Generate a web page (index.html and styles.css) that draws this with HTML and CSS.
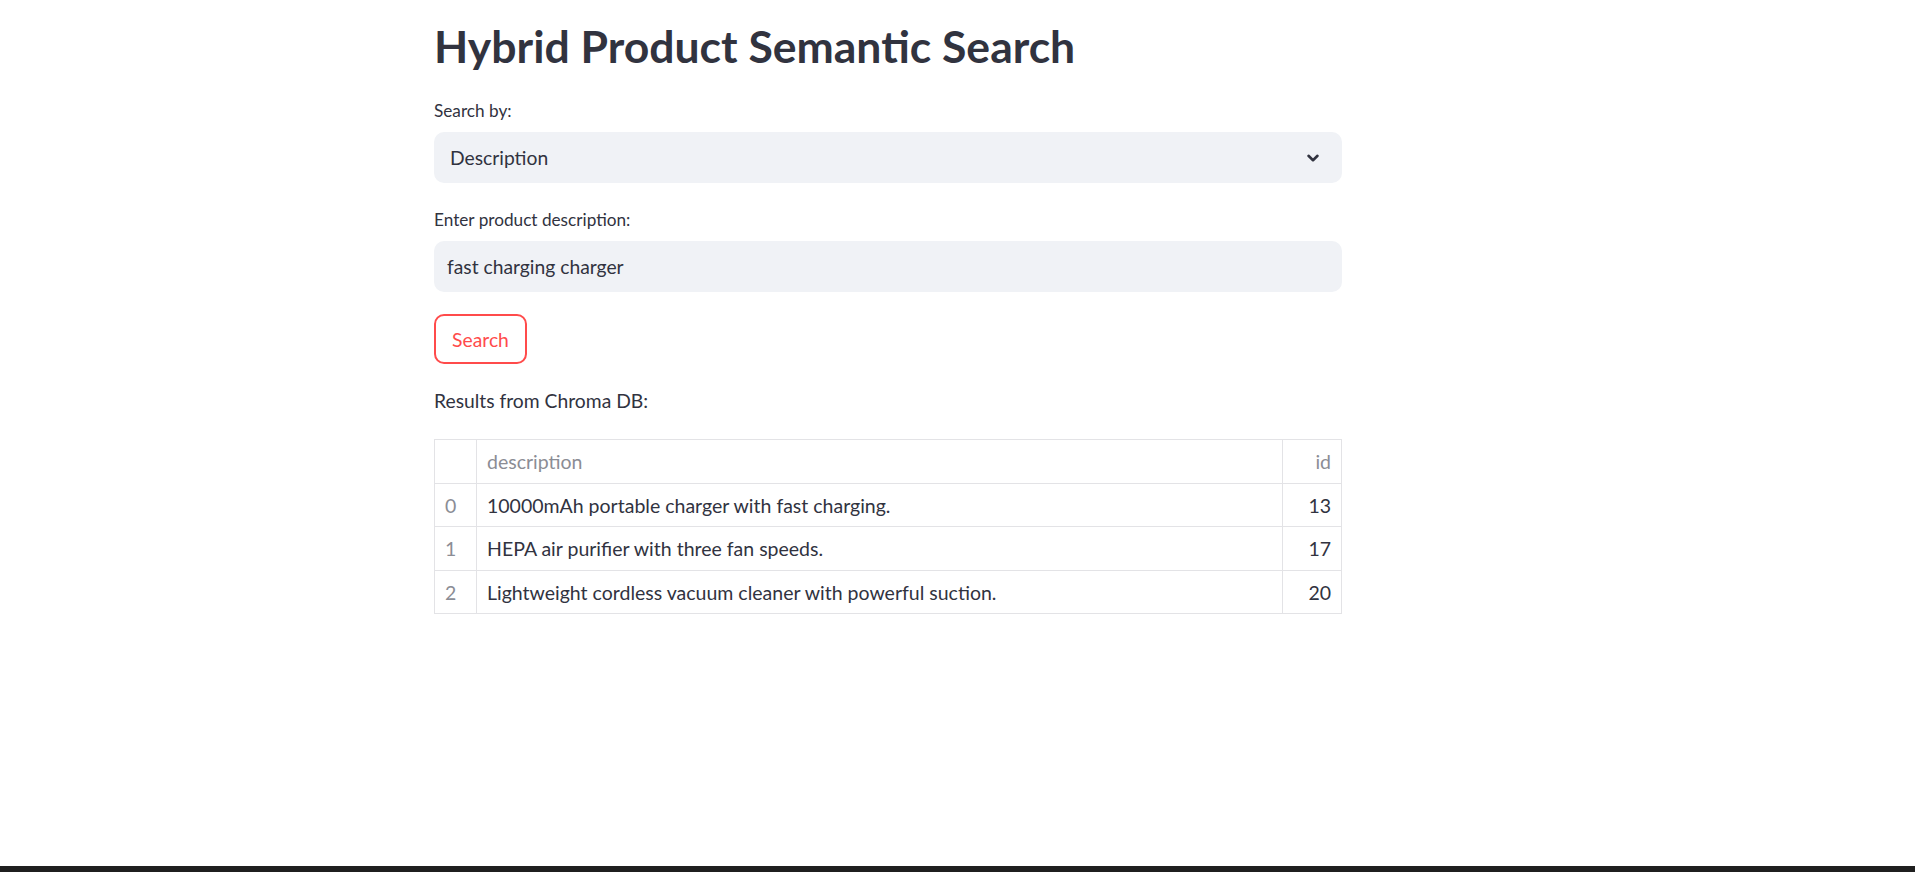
FILE: index.html
```html
<!DOCTYPE html>
<html lang="en">
<head>
<meta charset="utf-8">
<title>Hybrid Product Semantic Search</title>
<link rel="stylesheet" href="styles.css">
</head>
<body>
<div class="page">
  <main class="main">
    <h1 class="title">Hybrid Product Semantic Search</h1>
    <div class="field field-first">
      <label class="label">Search by:</label>
      <div class="select">
        <span class="select-value">Description</span>
        <svg class="chevron" width="16" height="16" viewBox="0 0 16 16" aria-hidden="true"><path d="M3.5 5.8 L8 10.2 L12.5 5.8" fill="none" stroke="#31333f" stroke-width="2.6" stroke-linecap="round" stroke-linejoin="round"/></svg>
      </div>
    </div>
    <div class="field field-second">
      <label class="label">Enter product description:</label>
      <div class="input">fast charging charger</div>
    </div>
    <button class="btn">Search</button>
    <p class="results-label">Results from Chroma DB:</p>
    <table class="grid">
      <thead>
        <tr><th class="idx"></th><th class="desc">description</th><th class="num">id</th></tr>
      </thead>
      <tbody>
        <tr><td class="idx">0</td><td class="desc">10000mAh portable charger with fast charging.</td><td class="num">13</td></tr>
        <tr><td class="idx">1</td><td class="desc">HEPA air purifier with three fan speeds.</td><td class="num">17</td></tr>
        <tr><td class="idx">2</td><td class="desc">Lightweight cordless vacuum cleaner with powerful suction.</td><td class="num">20</td></tr>
      </tbody>
    </table>
  </main>
  <div class="taskbar"></div>
</div>
</body>
</html>
```
FILE: styles.css
```css
* { box-sizing: border-box; }
html, body { margin: 0; padding: 0; background: #ffffff; }
body {
  font-family: "Lato", "Noto Sans", sans-serif;
  color: #31333f;
}
.page {
  display: flex;
  flex-direction: column;
  height: 100vh;
}
.main {
  flex: 1;
  width: 908px;
  margin-left: 434px;
  padding-top: 19px;
}
.title {
  margin: 0;
  font-size: 44.5px;
  line-height: 1.2;
  font-weight: 700;
  color: #31333f;
}
.field-first { margin-top: 28px; }
.field-second { margin-top: 26px; }
.label {
  display: block;
  font-size: 17.2px;
  line-height: 22px;
  height: 22px;
  margin-bottom: 10px;
}
.select {
  display: flex;
  align-items: center;
  justify-content: space-between;
  height: 51px;
  background: #f0f2f6;
  border-radius: 10px;
  padding: 0 21px 0 16px;
  font-size: 19.3px;
}
.chevron { display: block; }
.input {
  display: flex;
  align-items: center;
  height: 51px;
  background: #f0f2f6;
  border-radius: 10px;
  padding: 0 13px;
  font-size: 19.3px;
}
.btn {
  display: block;
  margin-top: 22px;
  height: 50px;
  width: 93px;
  border: 2px solid #ff4b4b;
  border-radius: 10px;
  background: #ffffff;
  color: #ff4b4b;
  font-family: inherit;
  font-size: 19.3px;
  padding: 0;
}
.results-label {
  margin: 25px 0 0;
  font-size: 19.3px;
  line-height: 24px;
}
.grid {
  margin-top: 26px;
  width: 908px;
  border-collapse: collapse;
  font-size: 19.5px;
  table-layout: fixed;
}
.grid th, .grid td {
  height: 43.5px;
  border: 1.5px solid #e3e3e6;
  padding: 0 10px;
  font-weight: 400;
  white-space: nowrap;
}
.grid th { color: #8b8d95; text-align: left; }
.grid td { color: #31333f; }
.grid .idx { width: 42px; color: #8b8d95; }
.grid .num { width: 59px; text-align: right; }
.grid th.num { color: #8b8d95; }
.taskbar {
  height: 6px;
  background: #1f1f1f;
  flex: none;
}
```
